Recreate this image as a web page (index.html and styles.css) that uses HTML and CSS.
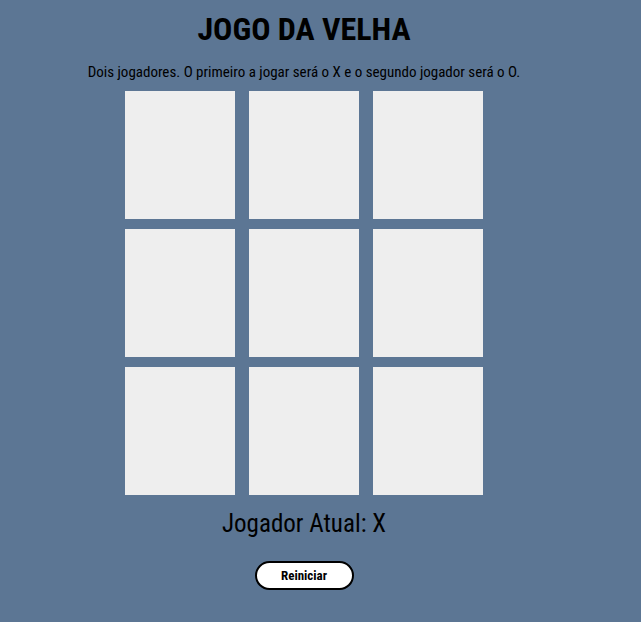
FILE: index.html
```html
<!DOCTYPE html>
<html lang="pt">
<head>
<meta charset="utf-8">
<title>Jogo da Velha</title>
<link rel="stylesheet" href="styles.css">
</head>
<body>
<main class="game">
  <h1 class="title">JOGO DA VELHA</h1>
  <p class="intro">Dois jogadores. O primeiro a jogar será o X e o segundo jogador será o O.</p>
  <div class="board">
    <div class="cell"></div>
    <div class="cell"></div>
    <div class="cell"></div>
    <div class="cell"></div>
    <div class="cell"></div>
    <div class="cell"></div>
    <div class="cell"></div>
    <div class="cell"></div>
    <div class="cell"></div>
  </div>
  <p class="status">Jogador Atual: X</p>
  <button class="restart" type="button">Reiniciar</button>
</main>
</body>
</html>
```
FILE: styles.css
```css
html, body {
  margin: 0;
  padding: 0;
}
body {
  background: #5c7694;
  font-family: Roboto, "Liberation Sans", sans-serif;
  font-stretch: 75%;
  color: #000;
  padding: 0 8px;
}
.game {
  width: 592px;
  display: flex;
  flex-direction: column;
  align-items: center;
}
.title {
  margin: 9px 0 0;
  font-size: 32px;
  line-height: 40px;
  font-weight: 700;
}
.intro {
  margin: 14px 0 0;
  font-size: 15px;
  line-height: 18px;
}
.board {
  margin-top: 10px;
  display: grid;
  grid-template-columns: repeat(3, 110px);
  grid-auto-rows: 128px;
  column-gap: 14px;
  row-gap: 10px;
}
.cell {
  background: #eeeeee;
}
.status {
  margin: 14px 0 0;
  font-size: 25px;
  line-height: 30px;
}
.restart {
  margin-top: 22px;
  width: 99px;
  height: 29px;
  background: #fff;
  border: 2px solid #000;
  border-radius: 15px;
  font-family: inherit;
  font-stretch: 75%;
  font-weight: 700;
  font-size: 13px;
  color: #000;
  padding: 0;
}
```
